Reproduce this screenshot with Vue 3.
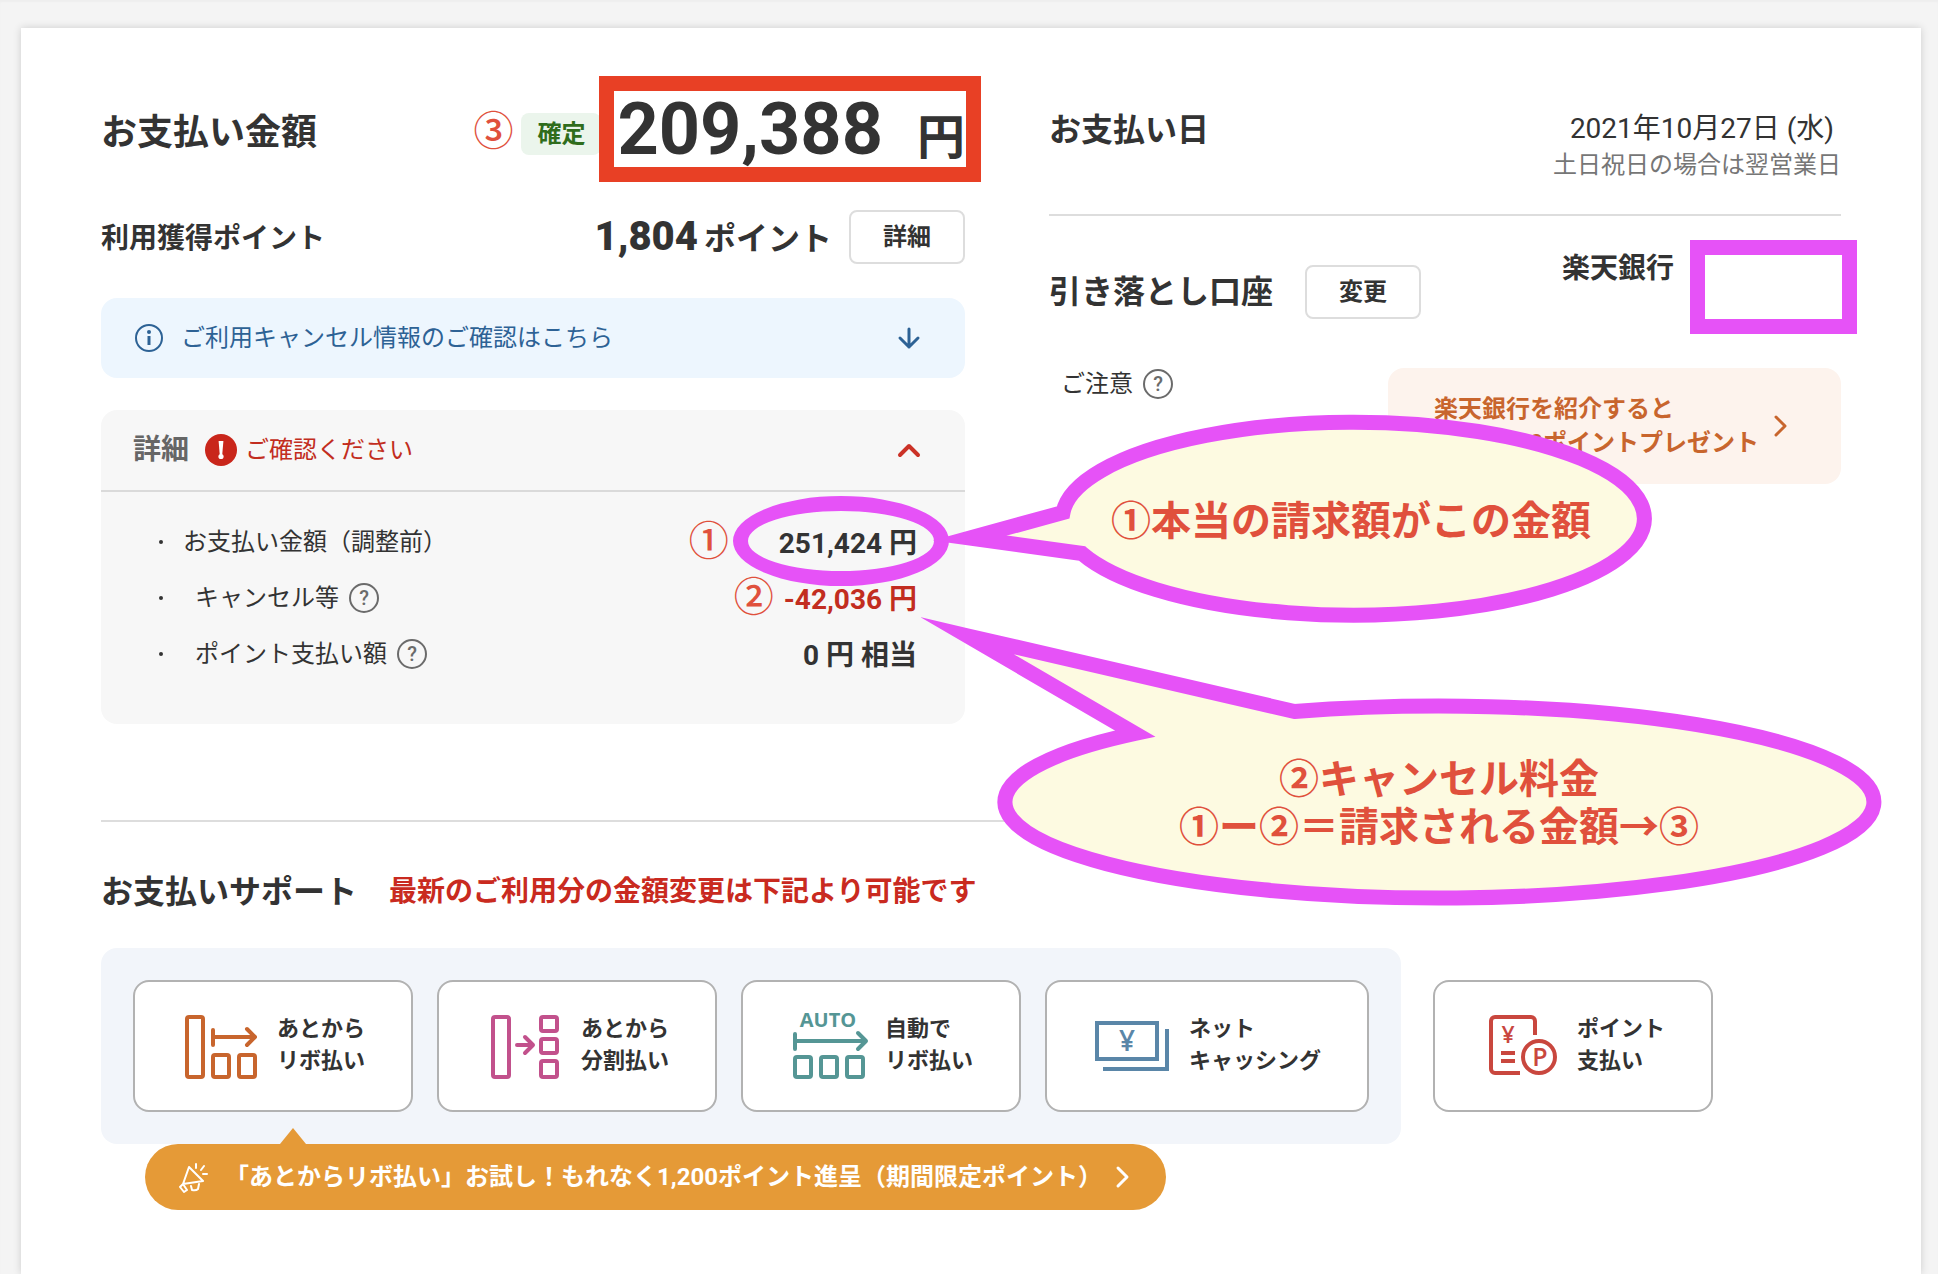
<script setup>
const details = [
  { label: 'お支払い金額（調整前）', help: false, value: '251,424 円', mark: '①', circled: true },
  { label: 'キャンセル等', help: true, value: '-42,036 円', mark: '②', negative: true },
  { label: 'ポイント支払い額', help: true, value: '0 円 相当' }
]
</script>

<template>
  <div class="page">
    <main class="card">
      <div class="summary">
        <section class="left">
          <div class="amount-row">
            <h2 class="title-lg">お支払い金額</h2>
            <div class="amount-side">
              <span class="mark">③</span>
              <span class="badge">確定</span>
              <p class="amount"><strong>209,388</strong><span class="yen">円</span></p>
            </div>
          </div>

          <div class="point-row">
            <h3 class="title-sm">利用獲得ポイント</h3>
            <div class="point-side">
              <p class="points"><strong>1,804</strong><span>ポイント</span></p>
              <button type="button" class="btn">詳細</button>
            </div>
          </div>

          <a href="#" class="info">
            <svg width="32" height="32" viewBox="0 0 32 32" fill="none" stroke="#2d6295">
              <circle cx="16" cy="16" r="13" stroke-width="2" />
              <path d="M16 14v9" stroke-width="3" />
              <circle cx="16" cy="10" r="2" fill="#2d6295" stroke="none" />
            </svg>
            <span class="info-text">ご利用キャンセル情報のご確認はこちら</span>
            <svg width="24" height="24" viewBox="0 0 24 24" fill="none" stroke="#2d6295" stroke-width="3" stroke-linecap="round" stroke-linejoin="round">
              <path d="M12 3v18M3 12l9 9l9-9" />
            </svg>
          </a>

          <div class="detail">
            <button type="button" class="detail-head">
              <span class="detail-title">詳細</span>
              <svg width="32" height="32" viewBox="0 0 32 32">
                <circle cx="16" cy="16" r="16" fill="#c9261b" />
                <path d="M13.600 7h4.800l-1.200 14h-2.400z" fill="#fff" />
                <circle cx="16" cy="22.500" r="2.600" fill="#fff" />
              </svg>
              <span class="detail-alert">ご確認ください</span>
              <svg class="push" width="24" height="24" viewBox="0 0 24 24" fill="none" stroke="#cb3227" stroke-width="4" stroke-linecap="round" stroke-linejoin="round">
                <path d="M3 17l9-9l9 9" />
              </svg>
            </button>
            <ul class="detail-list">
              <li v-for="d in details" :key="d.label">
                <span class="dot"></span>
                <span :class="{ indent: d.help }">{{ d.label }}</span>
                <button v-if="d.help" type="button" class="help" :aria-label="d.label">?</button>
                <span class="d-side">
                  <span v-if="d.mark" class="mark" :class="{ far: d.circled }">{{ d.mark }}</span>
                  <span class="d-value" :class="{ negative: d.negative }">
                    {{ d.value }}
                    <i v-if="d.circled" class="ring"></i>
                  </span>
                </span>
              </li>
            </ul>
          </div>
        </section>

        <section class="right">
          <div class="date-row">
            <h2 class="title-md">お支払い日</h2>
            <div class="date-side">
              <p class="date">2021年10月27日 (水)&nbsp;</p>
              <p class="date-note">土日祝日の場合は翌営業日</p>
            </div>
          </div>
          <div class="bank-row">
            <div class="bank-head">
              <h2 class="title-md">引き落とし口座</h2>
              <button type="button" class="btn">変更</button>
            </div>
            <div class="bank-side">
              <p class="bank">楽天銀行</p>
              <div class="mask"></div>
            </div>
          </div>
          <div class="note-row">
            <p class="note">ご注意 <button type="button" class="help" aria-label="ご注意">?</button></p>
            <a href="#" class="promo">
              <span>楽天銀行を紹介すると<br />最大1,000ポイントプレゼント</span>
              <svg width="24" height="24" viewBox="0 0 24 24" fill="none" stroke="#c8652d" stroke-width="3" stroke-linecap="round" stroke-linejoin="round">
                <path d="M7 3l9 9l-9 9" />
              </svg>
            </a>
          </div>
        </section>

        <div class="balloons">
          <svg width="970" height="510" viewBox="920 410 970 510" fill="#fdfae1" stroke="#e652f7" stroke-width="15" stroke-miterlimit="10">
            <path d="M969 538L1062 512.5A291 96.5 0 1 1 1081 553.5Z" />
            <path d="M966 635.7L1293.5 711.5A434.5 96 0 1 1 1134 733.5Z" />
          </svg>
          <p class="balloon-text first">①本当の請求額がこの金額</p>
          <p class="balloon-text second">②キャンセル料金<br />①ー②＝請求される金額→③</p>
        </div>
      </div>

      <section class="support">
        <div class="support-head">
          <h2 class="title-md">お支払いサポート</h2>
          <p class="support-note">最新のご利用分の金額変更は下記より可能です</p>
        </div>
        <div class="support-row">
          <div class="panel">
            <a href="#" class="tile">
              <svg class="icon" viewBox="0 0 80 80" stroke="#c8652d">
                <rect x="6" y="12" width="16" height="60" rx="2" />
                <rect x="32" y="50" width="16" height="22" rx="2" />
                <rect x="58" y="50" width="16" height="22" rx="2" />
                <path d="M32 25v15M32 32h42M66 24l8 8l-8 8" />
              </svg>
              <span>あとから<br />リボ払い</span>
            </a>
            <a href="#" class="tile">
              <svg class="icon" viewBox="0 0 80 80" stroke="#c2518c">
                <rect x="8" y="12" width="16" height="60" rx="2" />
                <rect x="56" y="12" width="16" height="14" rx="2" />
                <rect x="56" y="34" width="16" height="14" rx="2" />
                <rect x="56" y="56" width="16" height="16" rx="2" />
                <path d="M32 40h16M40 32l8 8l-8 8" />
              </svg>
              <span>あとから<br />分割払い</span>
            </a>
            <a href="#" class="tile">
              <svg class="icon" viewBox="0 0 80 80" stroke="#559695">
                <text x="39" y="22" font-size="20" font-weight="700" text-anchor="middle" fill="#559695">AUTO</text>
                <path d="M6 29v15M6 36h70M69 28l8 8l-8 8" />
                <rect x="6" y="52" width="16" height="20" rx="2" />
                <rect x="32" y="52" width="16" height="20" rx="2" />
                <rect x="58" y="52" width="16" height="20" rx="2" />
              </svg>
              <span>自動で<br />リボ払い</span>
            </a>
            <a href="#" class="tile">
              <svg class="icon sharp" viewBox="0 0 80 80" stroke="#5a86a8">
                <rect x="4" y="18" width="60" height="36" />
                <path d="M10 64h64V24" />
                <text x="34" y="46" font-size="28" font-weight="600" text-anchor="middle" fill="#5a86a8">¥</text>
              </svg>
              <span>ネット<br />キャッシング</span>
            </a>
          </div>
          <a href="#" class="tile">
            <svg class="icon sharp" viewBox="0 0 80 80" stroke="#c9473e">
              <path d="M54 30V16a4 4 0 0 0-4-4H14a4 4 0 0 0-4 4v48a4 4 0 0 0 4 4h25M20 48h14M20 56h14" />
              <circle cx="58" cy="52" r="16" />
              <text x="27" y="38" font-size="23" font-weight="600" text-anchor="middle" fill="#c9473e">¥</text>
              <text x="59" y="61" font-size="25" font-weight="600" text-anchor="middle" fill="#c9473e">P</text>
            </svg>
            <span>ポイント<br />支払い</span>
          </a>
        </div>
        <a href="#" class="banner">
          <svg width="32" height="32" viewBox="0 0 32 32" fill="none" stroke="#fff" stroke-width="2" stroke-linecap="round" stroke-linejoin="round">
            <path d="M12 6L26 20L6 23ZM6 23l-3 3l4 5l3-2l-4-6M14 25l1 4q4 1 6-1l1-5M19 3v4M24 9l3-4M26 13h4" />
          </svg>
          <span class="banner-text">「あとからリボ払い」お試し！もれなく1,200ポイント進呈（期間限定ポイント）</span>
          <svg width="24" height="24" viewBox="0 0 24 24" fill="none" stroke="#fff" stroke-width="3" stroke-linecap="round" stroke-linejoin="round">
            <path d="M8 3l9 9l-9 9" />
          </svg>
        </a>
      </section>
    </main>
  </div>
</template>

<style>
body {
  margin: 0;
  background: #f4f4f4;
}
</style>

<style scoped>
* {
  box-sizing: border-box;
}
h2, h3, p, ul {
  margin: 0;
  padding: 0;
}
a {
  text-decoration: none;
  color: inherit;
}
button {
  font-family: inherit;
  line-height: inherit;
  cursor: pointer;
}
svg {
  flex: none;
  display: block;
}
.page {
  min-height: 100vh;
  display: flex;
  flex-direction: column;
  padding: 28px 17px 0 21px;
  box-shadow: inset 0 2px 2px #eee;
  color: #333;
  font-family: Roboto, "Noto Sans CJK JP", sans-serif;
  line-height: 34px;
}
.card {
  flex: 1;
  padding: 60px 80px 64px;
  background: #fff;
  box-shadow: 0 0 8px rgba(0, 0, 0, 0.16);
}
.summary {
  position: relative;
  display: grid;
  grid-template-columns: 864fr 792fr;
  column-gap: 84px;
  padding-bottom: 96px;
  border-bottom: 2px solid #ddd;
}
.title-lg { font-size: 36px; line-height: 90px; }
.title-md { font-size: 32px; line-height: 40px; }
.title-sm { font-size: 28px; line-height: 58px; }

.mark {
  font-size: 40px;
  line-height: 40px;
  font-weight: 500;
  color: #e0503c;
}
.amount-row, .point-row {
  display: flex;
  justify-content: space-between;
}
.amount-row { height: 84px; }
.amount-side, .point-side {
  display: flex;
  align-items: center;
}
.amount-side .mark { margin-top: 4px; }
.badge {
  margin: 8px 0 0 8px;
  padding: 0 16px;
  border-radius: 8px;
  background: #ebf5ec;
  color: #2f6d1c;
  font-size: 24px;
  line-height: 42px;
  font-weight: 700;
}
.amount {
  position: relative;
  display: flex;
  align-items: baseline;
  gap: 34px;
  margin-left: 16px;
  font-size: 72px;
  line-height: 84px;
}
.amount::after {
  content: "";
  position: absolute;
  inset: -12px -16px -10px -18px;
  border: 15px solid #e84025;
}
.yen { font-size: 48px; line-height: 48px; font-weight: 700; }
.point-row { height: 54px; margin-top: 38px; }
.point-side { gap: 17px; }
.points {
  display: flex;
  align-items: baseline;
  gap: 6px;
  font-size: 32px;
  line-height: 40px;
  font-weight: 700;
}
.points strong { font-size: 40px; line-height: 54px; }
.btn {
  width: 116px;
  height: 54px;
  border: 2px solid #ddd;
  border-radius: 8px;
  background: #fff;
  color: #333;
  font-size: 24px;
  font-weight: 700;
}
.info {
  display: flex;
  align-items: center;
  height: 80px;
  margin-top: 34px;
  padding: 0 44px 0 32px;
  border-radius: 16px;
  background: #edf6fe;
  color: #2d6295;
}
.info-text {
  flex: 1;
  margin-left: 16px;
  font-size: 24px;
}
.detail {
  margin-top: 32px;
  border-radius: 16px;
  background: #f7f7f7;
}
.detail-head {
  display: flex;
  align-items: center;
  width: 100%;
  height: 82px;
  padding: 0 44px 0 32px;
  border: 0;
  border-bottom: 2px solid #dadada;
  background: none;
}
.detail-title {
  margin-right: 16px;
  color: #666;
  font-size: 28px;
  font-weight: 700;
}
.detail-alert {
  margin-left: 8px;
  color: #c22d20;
  font-size: 24px;
}
.push { margin-left: auto; }
.detail-list {
  padding: 22px 48px 42px 58px;
  list-style: none;
}
.detail-list li {
  display: flex;
  align-items: center;
  height: 56px;
  font-size: 24px;
}
.dot {
  width: 4px;
  height: 4px;
  margin-right: 20px;
  border-radius: 50%;
  background: #333;
}
.indent { margin-left: 12px; }
.help {
  width: 30px;
  height: 30px;
  margin-left: 10px;
  padding: 0;
  border: 2px solid #6b6b6b;
  border-radius: 50%;
  background: none;
  color: #6b6b6b;
  font-size: 20px;
  line-height: 26px;
  font-weight: 500;
}
.d-side {
  display: flex;
  align-items: center;
  gap: 10px;
  margin-left: auto;
}
.far { margin-right: 40px; }
.d-value {
  position: relative;
  padding-top: 4px;
  font-size: 28px;
  line-height: 40px;
  font-weight: 700;
}
.negative { color: #c22d20; }
.ring {
  position: absolute;
  inset: -24px -32px -22px -46px;
  border: 15px solid #e652f7;
  border-radius: 50%;
}

.right { padding-top: 22px; }
.date-row {
  display: flex;
  justify-content: space-between;
  height: 106px;
  border-bottom: 2px solid #ddd;
}
.date-side { text-align: right; }
.date {
  font-size: 28px;
  line-height: 38px;
}
.date-note {
  color: #767676;
  font-size: 24px;
}
.bank-row {
  display: flex;
  justify-content: space-between;
  padding-top: 24px;
}
.bank-head {
  display: flex;
  align-items: center;
  gap: 32px;
  height: 104px;
}
.bank-side {
  display: flex;
  gap: 16px;
  height: 94px;
  margin-right: -16px;
}
.bank {
  font-size: 28px;
  line-height: 58px;
  font-weight: 700;
}
.mask {
  width: 167px;
  border: 15px solid #e652f7;
}
.note-row {
  display: flex;
  justify-content: space-between;
  align-items: flex-start;
  margin-top: 24px;
}
.note {
  display: flex;
  align-items: center;
  height: 32px;
  margin-left: 12px;
  font-size: 24px;
}
.promo {
  display: flex;
  align-items: center;
  gap: 10px;
  padding: 24px 48px 24px 46px;
  border-radius: 16px;
  background: #fdf3ed;
  color: #c8652d;
  font-size: 24px;
  font-weight: 700;
}
.balloons {
  position: absolute;
  top: 322px;
  left: 820px;
}
.balloon-text {
  position: absolute;
  color: #e0503c;
  font-size: 40px;
  line-height: 48px;
  font-weight: 700;
  text-align: center;
  white-space: nowrap;
}
.first { top: 88px; left: 190px; }
.second { top: 346px; left: 258px; }

.support { padding-top: 50px; }
.support-head {
  display: flex;
  align-items: center;
  gap: 32px;
}
.support-note {
  color: #c92a20;
  font-size: 28px;
  font-weight: 700;
}
.support-row {
  display: flex;
  align-items: center;
  gap: 32px;
  margin-top: 36px;
}
.panel {
  display: flex;
  gap: 24px;
  padding: 32px;
  border-radius: 16px;
  background: #f2f5fa;
}
.tile {
  display: flex;
  align-items: center;
  gap: 16px;
  height: 132px;
  padding: 0 46px 2px;
  border: 2px solid #b2b2b2;
  border-radius: 16px;
  background: #fff;
  font-size: 22px;
  line-height: 32px;
  font-weight: 700;
}
.icon {
  width: 80px;
  height: 80px;
  fill: none;
  stroke-width: 4;
  stroke-linecap: round;
  stroke-linejoin: round;
}
.icon text {
  stroke: none;
  font-family: "Open Sans", "Noto Sans", sans-serif;
}
.sharp {
  stroke-linecap: butt;
  stroke-linejoin: miter;
}
.banner {
  position: relative;
  display: inline-flex;
  align-items: center;
  height: 66px;
  margin-left: 44px;
  padding: 0 32px;
  border-radius: 33px;
  background: #e59a37;
  color: #fff;
  font-size: 24px;
  font-weight: 700;
}
.banner::before {
  content: "";
  position: absolute;
  top: -16px;
  left: 135px;
  border: 13px solid transparent;
  border-top: 0;
  border-bottom: 16px solid #e59a37;
}
.banner-text { margin: 0 8px 0 16px; }
</style>
